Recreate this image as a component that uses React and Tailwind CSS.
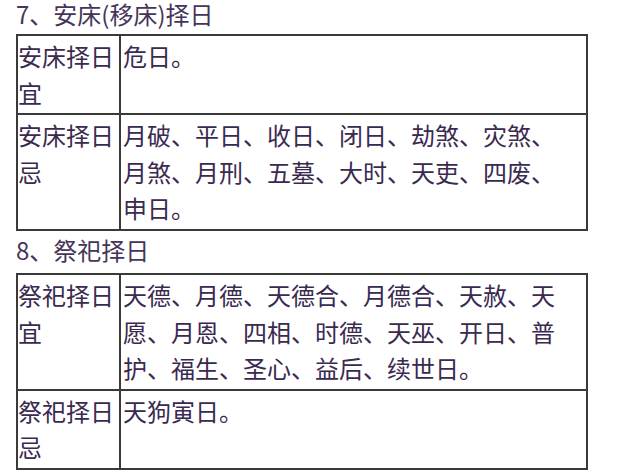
import React from "react";

const font = { fontFamily: '"Noto Sans CJK SC", "Noto Sans", sans-serif' };

function Row({ left, lines, first }) {
  return (
    <div className={"flex " + (first ? "" : "border-t-2 border-[#3a3a3a]")}>
      <div className="w-[103px] shrink-0 border-r-2 border-[#3a3a3a] py-[2px] pl-0">
        {left.map((l, i) => (
          <div key={i} className="whitespace-nowrap">{l}</div>
        ))}
      </div>
      <div className="flex-1 py-[2px] pl-[2px]">
        {lines.map((l, i) => (
          <div key={i} className="whitespace-nowrap">{l}</div>
        ))}
      </div>
    </div>
  );
}

export default function App() {
  return (
    <div
      className="w-[626px] h-[473px] overflow-hidden bg-white text-[24px] leading-[36.6px] text-[#3a2a50]"
      style={font}
    >
      <div className="mb-[6px] pl-[16px] leading-[28px] text-[#45355a]">7、安床(移床)择日</div>
      <div className="ml-[16px] w-[572px] border-2 border-[#3a3a3a]">
        <Row first left={["安床择日", "宜"]} lines={["危日。", "\u00a0"]} />
        <Row
          left={["安床择日", "忌"]}
          lines={["月破、平日、收日、闭日、劫煞、灾煞、", "月煞、月刑、五墓、大时、天吏、四废、", "申日。"]}
        />
      </div>
      <div className="mb-[5px] pl-[16px] leading-[37px] text-[#45355a]">8、祭祀择日</div>
      <div className="ml-[16px] w-[572px] border-2 border-[#3a3a3a]">
        <Row
          first
          left={["祭祀择日", "宜"]}
          lines={["天德、月德、天德合、月德合、天赦、天", "愿、月恩、四相、时德、天巫、开日、普", "护、福生、圣心、益后、续世日。"]}
        />
        <Row left={["祭祀择日", "忌"]} lines={["天狗寅日。", "\u00a0"]} />
      </div>
    </div>
  );
}
